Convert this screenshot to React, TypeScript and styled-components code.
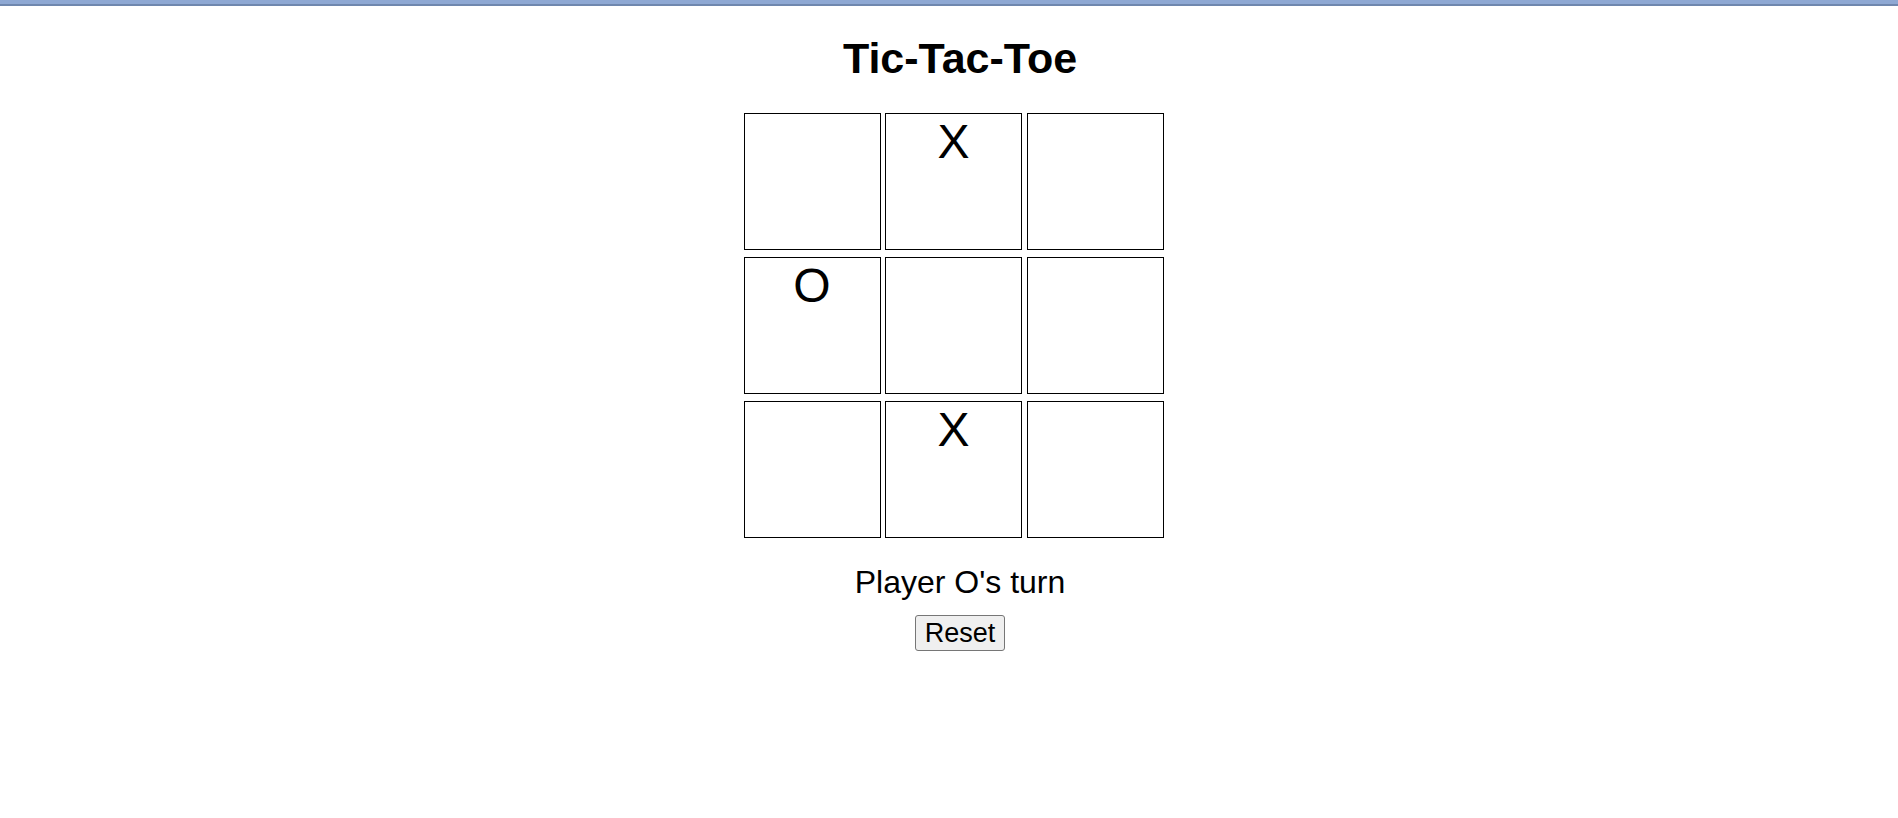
import { useState } from 'react';
import styled, { createGlobalStyle } from 'styled-components';

type Mark = 'X' | 'O' | null;

// starting position as shown in the screenshot
const initialSquares: Mark[] = [null, 'X', null, 'O', null, null, null, 'X', null];

const GlobalStyle = createGlobalStyle`
  html, body {
    margin: 0;
    padding: 0;
    background: #ffffff;
  }
  body {
    font-family: "Liberation Sans", Arial, sans-serif;
    color: #000;
  }
`;

const TopBar = styled.div`
  height: 4px;
  background: #8ea8d3;
  border-bottom: 2px solid #6f87ae;
`;

const Page = styled.div`
  display: flex;
  flex-direction: column;
  align-items: center;
  padding-left: 22px;
`;

const Title = styled.h1`
  margin: 28px 0 0;
  font-size: 43px;
  line-height: 49px;
  font-weight: bold;
`;

const Board = styled.div`
  margin: 30px 13px 0 0;
  display: grid;
  grid-template-columns: repeat(3, 137px);
  grid-auto-rows: 137px;
  column-gap: 4.5px;
  row-gap: 7px;
`;

const Square = styled.div<{ $filled: boolean }>`
  box-sizing: border-box;
  border: 1px solid #000;
  font-size: 48px;
  line-height: normal;
  text-align: center;
  cursor: ${p => (p.$filled ? 'default' : 'pointer')};
  user-select: none;
`;

const Status = styled.div`
  margin-top: 26px;
  font-size: 32px;
  line-height: 37px;
`;

const ResetButton = styled.button`
  margin-top: 14px;
  padding: 2px 9px;
  font-family: "Liberation Sans", Arial, sans-serif;
  font-size: 27px;
  line-height: 30px;
  color: #000;
  background: #efefef;
  border: 1px solid #767676;
  border-radius: 3px;
  cursor: pointer;

  &:hover {
    background: #e5e5e5;
  }
`;

const App = () => {
  const [squares, setSquares] = useState<Mark[]>(initialSquares);
  const [player, setPlayer] = useState<'X' | 'O'>('O');

  const handleClick = (i: number) => {
    if (squares[i]) return;
    const next = squares.slice();
    next[i] = player;
    setSquares(next);
    setPlayer(player === 'X' ? 'O' : 'X');
  };

  const reset = () => {
    setSquares(Array(9).fill(null));
    setPlayer('X');
  };

  return (
    <>
      <GlobalStyle />
      <TopBar />
      <Page>
        <Title>Tic-Tac-Toe</Title>
        <Board>
          {squares.map((mark, i) => (
            <Square key={i} $filled={!!mark} onClick={() => handleClick(i)}>
              {mark}
            </Square>
          ))}
        </Board>
        <Status>Player {player}'s turn</Status>
        <ResetButton onClick={reset}>Reset</ResetButton>
      </Page>
    </>
  );
};

export default App;
